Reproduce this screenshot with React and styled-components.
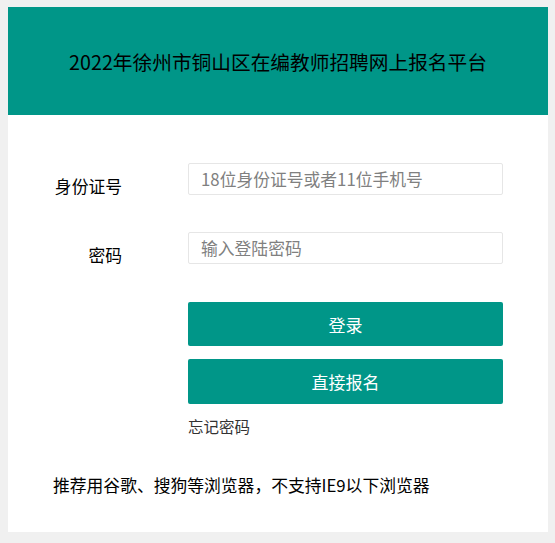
import React from 'react';
import styled, { createGlobalStyle } from 'styled-components';

const GlobalStyle = createGlobalStyle`
  html, body {
    margin: 0;
    padding: 0;
    background: #f0f0f0;
  }
  body {
    font-family: "Noto Sans CJK SC", "Noto Sans", sans-serif;
    color: #000;
  }
`;

const Page = styled.div`
  padding: 7px 7px 11px 8px;
`;

const Card = styled.div`
  width: 540px;
  height: 525px;
  background: #fff;
  display: flex;
  flex-direction: column;
`;

const Header = styled.div`
  height: 108px;
  background: #009688;
  display: flex;
  align-items: center;
  justify-content: center;
  font-size: 19.7px;
  color: #000;
`;

const Form = styled.div`
  padding-top: 48px;
  display: flex;
  flex-direction: column;
`;

const Row = styled.div`
  display: grid;
  grid-template-columns: 114px 315px;
  column-gap: 66px;
  margin-bottom: ${p => p.gap || 0}px;
`;

const Label = styled.div`
  text-align: right;
  font-size: 16.8px;
  line-height: 20px;
  padding-top: 13px;
`;

const Input = styled.input`
  box-sizing: border-box;
  width: 315px;
  height: 32px;
  border: 1px solid #e6e6e6;
  border-radius: 2px;
  padding: 0 12px;
  font-family: inherit;
  font-size: 16.8px;
  outline: none;
  &::placeholder {
    color: #808080;
  }
`;

const Actions = styled.div`
  margin-left: 180px;
  width: 315px;
  display: flex;
  flex-direction: column;
  gap: 13px;
`;

const Button = styled.button`
  height: ${p => p.h}px;
  border: none;
  border-radius: 2px;
  background: #009688;
  color: #fff;
  font-family: inherit;
  font-size: 17px;
  cursor: pointer;
`;

const Forgot = styled.a`
  display: block;
  margin-top: 11px;
  margin-left: 180px;
  font-size: 15.5px;
  line-height: 22px;
  color: #333;
  text-decoration: none;
`;

const Tip = styled.p`
  margin: 37px 0 0 45px;
  font-size: 16.8px;
  line-height: 22px;
`;

export default function App() {
  return (
    <Page>
      <GlobalStyle />
      <Card>
        <Header>2022年徐州市铜山区在编教师招聘网上报名平台</Header>
        <Form>
          <Row gap={36}>
            <Label>身份证号</Label>
            <Input placeholder="18位身份证号或者11位手机号" />
          </Row>
          <Row gap={37}>
            <Label>密码</Label>
            <Input type="password" placeholder="输入登陆密码" />
          </Row>
          <Actions>
            <Button h={44}>登录</Button>
            <Button h={45}>直接报名</Button>
          </Actions>
          <Forgot href="#">忘记密码</Forgot>
          <Tip>推荐用谷歌、搜狗等浏览器，不支持IE9以下浏览器</Tip>
        </Form>
      </Card>
    </Page>
  );
}
